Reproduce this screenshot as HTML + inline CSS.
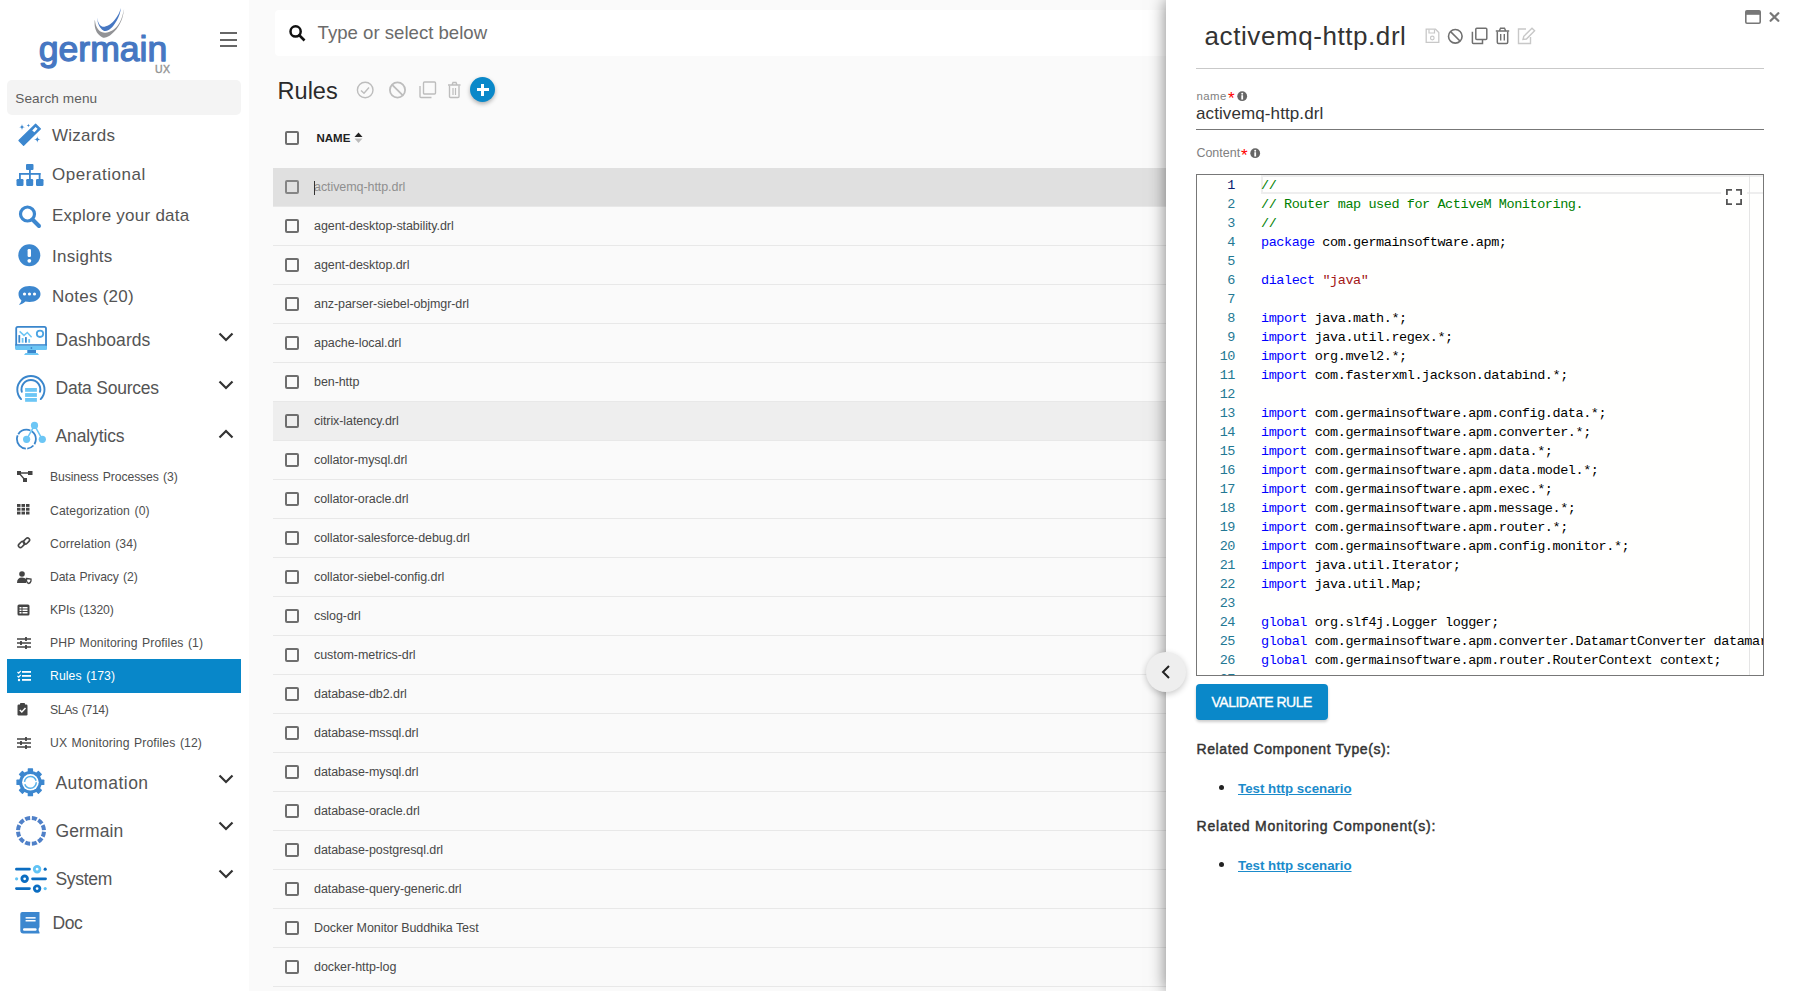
<!DOCTYPE html>
<html><head><meta charset="utf-8"><title>Rules</title>
<style>
html,body{margin:0;padding:0;}
body{width:1794px;height:991px;overflow:hidden;position:relative;background:#fafafa;font-family:"Liberation Sans", sans-serif;}
.t{position:absolute;white-space:nowrap;}
.m{font-family:"Liberation Mono", monospace;}
svg{overflow:visible;}
</style></head><body>
<div style="position:absolute;left:0px;top:0px;width:249px;height:991px;background:#fff;"></div>
<svg style="position:absolute;left:85px;top:0px;" width="50" height="45" viewBox="0 0 50 45"><path d="M9.76 19.98 C9.54 20.13 9.50 24.98 9.99 27.25 C10.48 29.52 11.35 31.86 12.72 33.61 C14.08 35.35 16.35 37.24 18.17 37.69 C19.98 38.15 21.80 37.31 23.61 36.33 C25.43 35.35 27.40 33.53 29.06 31.79 C30.73 30.05 32.24 28.16 33.61 25.89 C34.97 23.61 36.33 20.89 37.24 18.17 C38.15 15.44 39.21 9.39 39.06 9.54 C38.90 9.69 37.39 16.42 36.33 19.07 C35.27 21.72 34.21 23.54 32.70 25.43 C31.18 27.32 29.29 29.22 27.25 30.43 C25.20 31.64 22.48 32.55 20.44 32.70 C18.39 32.85 16.50 32.39 14.99 31.34 C13.47 30.28 12.22 28.23 11.35 26.34 C10.48 24.45 9.99 19.83 9.76 19.98Z" fill="#929396"/><path d="M12.26 17.71 C12.22 17.86 12.49 21.12 12.94 22.71 C13.40 24.30 13.96 25.89 14.99 27.25 C16.01 28.61 17.64 30.43 19.07 30.88 C20.51 31.34 22.10 30.81 23.61 29.97 C25.13 29.14 26.79 27.48 28.16 25.89 C29.52 24.30 30.73 22.33 31.79 20.44 C32.85 18.54 33.83 16.58 34.51 14.53 C35.20 12.49 36.03 8.25 35.88 8.17 C35.73 8.10 34.59 12.19 33.61 14.08 C32.62 15.97 31.34 17.86 29.97 19.53 C28.61 21.19 27.17 22.86 25.43 24.07 C23.69 25.28 21.19 26.57 19.53 26.79 C17.86 27.02 16.50 26.26 15.44 25.43 C14.38 24.60 13.70 23.09 13.17 21.80 C12.64 20.51 12.30 17.56 12.26 17.71Z" fill="#4677c2"/></svg>
<svg style="position:absolute;left:36px;top:30px" width="136" height="42"><text x="2.8" y="30.9" textLength="128.5" lengthAdjust="spacingAndGlyphs" font-family="Liberation Sans" font-size="35" fill="#4677c2" stroke="#4677c2" stroke-width="1.25" stroke-linejoin="round">germain</text></svg>
<div class="t" style="left:155px;top:63.81px;font-size:10.5px;line-height:10.5px;color:#939393;font-weight:normal;letter-spacing:0.3px;-webkit-text-stroke:0.4px #939393;">UX</div>
<div style="position:absolute;left:220px;top:32px;width:17px;height:2.4px;background:#666;"></div>
<div style="position:absolute;left:220px;top:38.6px;width:17px;height:2.4px;background:#666;"></div>
<div style="position:absolute;left:220px;top:45px;width:17px;height:2.4px;background:#666;"></div>
<div style="position:absolute;left:7px;top:80px;width:234px;height:35px;background:#f4f4f4;border-radius:5px;"></div>
<div class="t" style="left:15.3px;top:91.82px;font-size:13.6px;line-height:13.6px;color:#5e5e5e;font-weight:normal;letter-spacing:0.1px;">Search menu</div>
<div class="t" style="left:52px;top:127.00px;font-size:17px;line-height:17px;color:#545454;font-weight:normal;letter-spacing:0.25px;">Wizards</div>
<div class="t" style="left:52px;top:166.00px;font-size:17px;line-height:17px;color:#545454;font-weight:normal;letter-spacing:0.55px;">Operational</div>
<div class="t" style="left:52px;top:207.00px;font-size:17px;line-height:17px;color:#545454;font-weight:normal;letter-spacing:0.25px;">Explore your data</div>
<div class="t" style="left:52px;top:248.00px;font-size:17px;line-height:17px;color:#545454;font-weight:normal;letter-spacing:0.25px;">Insights</div>
<div class="t" style="left:52px;top:288.00px;font-size:17px;line-height:17px;color:#545454;font-weight:normal;letter-spacing:0.25px;">Notes (20)</div>
<svg style="position:absolute;left:14px;top:120px;" width="34" height="30" viewBox="0 0 34 30"><g fill="#3c87cf"><polygon points="5,20.5 21.6,4.2 26.4,8.9 9.6,25.3" stroke="#3c87cf" stroke-width="1.3" stroke-linejoin="round"/><polygon points="18.2,10.5 21.5,7 23.6,8.8 20.4,12.3" fill="#fff"/><path d="M8 3.6999999999999997 Q8 7.1 11.4 7.1 Q8 7.1 8 10.5 Q8 7.1 4.6 7.1 Q8 7.1 8 3.6999999999999997Z"/><path d="M14.4 3.8 Q14.4 5.5 16.1 5.5 Q14.4 5.5 14.4 7.2 Q14.4 5.5 12.700000000000001 5.5 Q14.4 5.5 14.4 3.8Z"/><path d="M23.3 15.999999999999998 Q23.3 19.4 26.7 19.4 Q23.3 19.4 23.3 22.799999999999997 Q23.3 19.4 19.900000000000002 19.4 Q23.3 19.4 23.3 15.999999999999998Z"/></g></svg>
<svg style="position:absolute;left:16px;top:164px;" width="28" height="22" viewBox="0 0 28 22"><g fill="#3c87cf"><rect x="10" y="0" width="7.5" height="6" rx="1"/><rect x="0.5" y="15" width="7" height="7" rx="1.2"/><rect x="10.2" y="15" width="7" height="7" rx="1.2"/><rect x="20" y="15" width="7.5" height="7" rx="1.2"/><rect x="13" y="5" width="1.8" height="10"/><rect x="3" y="9" width="21.5" height="1.8"/><rect x="3" y="9" width="1.8" height="6"/><rect x="22.7" y="9" width="1.8" height="6"/></g></svg>
<svg style="position:absolute;left:18px;top:205px;" width="24" height="22" viewBox="0 0 24 22"><g fill="none" stroke="#3c87cf"><circle cx="9.5" cy="9" r="7" stroke-width="3.2"/><path d="M14.5 14.5 L21 21" stroke-width="4" stroke-linecap="round"/></g></svg>
<svg style="position:absolute;left:18px;top:244px;" width="23" height="23" viewBox="0 0 23 23"><circle cx="11.3" cy="11.3" r="11" fill="#3c87cf"/><rect x="9.6" y="5" width="3.4" height="8" rx="1.2" fill="#fff"/><circle cx="11.3" cy="16.8" r="1.9" fill="#fff"/></svg>
<svg style="position:absolute;left:18px;top:285px;" width="23" height="21" viewBox="0 0 23 21"><path d="M11.5 1 C17.8 1 22.5 4.5 22.5 9 C22.5 13.5 17.8 17 11.5 17 C10 17 8.7 16.8 7.4 16.5 C5.5 18.3 3 19.5 0.8 19.8 C2.2 18.5 3.2 16.9 3.4 15.2 C1.4 13.7 0.5 11.5 0.5 9 C0.5 4.5 5.2 1 11.5 1Z" fill="#3c87cf"/><circle cx="6.5" cy="9" r="1.6" fill="#fff"/><circle cx="11.5" cy="9" r="1.6" fill="#fff"/><circle cx="16.5" cy="9" r="1.6" fill="#fff"/></svg>
<div class="t" style="left:55.5px;top:332.01px;font-size:17.5px;line-height:17.5px;color:#545454;font-weight:normal;letter-spacing:0.05px;">Dashboards</div>
<svg style="position:absolute;left:218px;top:332px;" width="16" height="10" viewBox="0 0 16 10"><path d="M1.5 1.5 L8 8 L14.5 1.5" fill="none" stroke="#333" stroke-width="2.2"/></svg>
<div class="t" style="left:55.5px;top:380.01px;font-size:17.5px;line-height:17.5px;color:#545454;font-weight:normal;letter-spacing:-0.22px;">Data Sources</div>
<svg style="position:absolute;left:218px;top:380px;" width="16" height="10" viewBox="0 0 16 10"><path d="M1.5 1.5 L8 8 L14.5 1.5" fill="none" stroke="#333" stroke-width="2.2"/></svg>
<div class="t" style="left:55.5px;top:428.01px;font-size:17.5px;line-height:17.5px;color:#545454;font-weight:normal;letter-spacing:-0.12px;">Analytics</div>
<svg style="position:absolute;left:218px;top:428.5px;" width="16" height="10" viewBox="0 0 16 10"><path d="M1.5 8.5 L8 2 L14.5 8.5" fill="none" stroke="#333" stroke-width="2.2"/></svg>
<div class="t" style="left:55.5px;top:775.01px;font-size:17.5px;line-height:17.5px;color:#545454;font-weight:normal;letter-spacing:0.45px;">Automation</div>
<svg style="position:absolute;left:218px;top:774px;" width="16" height="10" viewBox="0 0 16 10"><path d="M1.5 1.5 L8 8 L14.5 1.5" fill="none" stroke="#333" stroke-width="2.2"/></svg>
<div class="t" style="left:55.5px;top:823.00px;font-size:17.5px;line-height:17.5px;color:#545454;font-weight:normal;letter-spacing:0.1px;">Germain</div>
<svg style="position:absolute;left:218px;top:821px;" width="16" height="10" viewBox="0 0 16 10"><path d="M1.5 1.5 L8 8 L14.5 1.5" fill="none" stroke="#333" stroke-width="2.2"/></svg>
<div class="t" style="left:55.5px;top:871.01px;font-size:17.5px;line-height:17.5px;color:#545454;font-weight:normal;letter-spacing:-0.3px;">System</div>
<svg style="position:absolute;left:218px;top:869px;" width="16" height="10" viewBox="0 0 16 10"><path d="M1.5 1.5 L8 8 L14.5 1.5" fill="none" stroke="#333" stroke-width="2.2"/></svg>
<svg style="position:absolute;left:12px;top:322px;" width="38" height="36" viewBox="0 0 38 36"><rect x="4.2" y="4.9" width="29.8" height="22.2" rx="1.6" fill="none" stroke="#3a86cc" stroke-width="1.8"/><rect x="3.3" y="23.2" width="31.6" height="4.8" rx="1" fill="#6cc6f5"/><rect x="3.3" y="22.2" width="31.6" height="1.4" fill="#3a86cc"/><circle cx="19.4" cy="26" r="0.9" fill="#3a86cc"/><rect x="15.3" y="28" width="8.7" height="3" fill="#3a86cc"/><path d="M13.5 30.9 H25.5 L27 32.9 H12Z" fill="#6cc6f5"/><g><rect x="6.4" y="13.1" width="1.8" height="7.6" fill="#3a86cc"/><rect x="9.7" y="16" width="1.8" height="4.7" fill="#6cc6f5"/><rect x="13" y="15.1" width="1.8" height="5.6" fill="#3a86cc"/><rect x="16.3" y="17.1" width="1.8" height="3.6" fill="#6cc6f5"/></g><path d="M7.6 9.4 L12 13.4 L15.3 10.5 L19.6 15.3" fill="none" stroke="#6cc6f5" stroke-width="1.5"/><circle cx="28" cy="11.8" r="3.2" fill="none" stroke="#4ba3e3" stroke-width="1.8"/></svg>
<svg style="position:absolute;left:12px;top:370px;" width="38" height="36" viewBox="0 0 38 36"><path d="M9.1 29.1 A13.6 13.6 0 1 1 28.7 29.1" fill="none" stroke="#3a86cc" stroke-width="1.9" stroke-linecap="round"/><path d="M9.8 21.8 A9.4 9.4 0 1 1 28 21.8" fill="none" stroke="#3a86cc" stroke-width="1.9" stroke-linecap="round"/><g fill="#6cc6f5"><rect x="13.1" y="18" width="11.8" height="3.8"/><rect x="13.1" y="23.1" width="11.8" height="3.8"/><rect x="13.1" y="28" width="11.8" height="3.8"/></g></svg>
<svg style="position:absolute;left:12px;top:418px;" width="38" height="34" viewBox="0 0 38 34"><circle cx="14.4" cy="21.1" r="9.5" fill="none" stroke="#3a86cc" stroke-width="1.8" stroke-dasharray="5.31 1.66 6.96 1.49 18.07 1.33 13.76 1.66 9.45 0"/><path d="M14.6 21.3 L22.5 7.4 L30.3 21.3" fill="none" stroke="#6cc6f5" stroke-width="1.5"/><circle cx="22.5" cy="7.4" r="3.6" fill="#6cc6f5"/><circle cx="14.6" cy="21.3" r="3.6" fill="#6cc6f5"/><circle cx="30.3" cy="21.3" r="3.6" fill="#6cc6f5"/></svg>
<svg style="position:absolute;left:12px;top:762px;" width="38" height="38" viewBox="0 0 38 38"><g transform="translate(18.4,20.3)"><rect x="-2.7" y="-14" width="5.4" height="6" rx="0.6" fill="#3c87cf" transform="rotate(0)"/><rect x="-2.7" y="-14" width="5.4" height="6" rx="0.6" fill="#3c87cf" transform="rotate(45)"/><rect x="-2.7" y="-14" width="5.4" height="6" rx="0.6" fill="#3c87cf" transform="rotate(90)"/><rect x="-2.7" y="-14" width="5.4" height="6" rx="0.6" fill="#3c87cf" transform="rotate(135)"/><rect x="-2.7" y="-14" width="5.4" height="6" rx="0.6" fill="#3c87cf" transform="rotate(180)"/><rect x="-2.7" y="-14" width="5.4" height="6" rx="0.6" fill="#3c87cf" transform="rotate(225)"/><rect x="-2.7" y="-14" width="5.4" height="6" rx="0.6" fill="#3c87cf" transform="rotate(270)"/><rect x="-2.7" y="-14" width="5.4" height="6" rx="0.6" fill="#3c87cf" transform="rotate(315)"/><circle r="11.3" fill="#3c87cf"/><circle r="8.3" fill="#fff"/><circle r="5.9" fill="none" stroke="#56b0ea" stroke-width="1.5" stroke-dasharray="16 2.5"/></g></svg>
<svg style="position:absolute;left:12px;top:811px;" width="38" height="38" viewBox="0 0 38 38"><path d="M31.97 20.75 A13 13 0 0 1 30.66 25.65 M29.81 27.12 A13 13 0 0 1 26.22 30.71 M24.75 31.56 A13 13 0 0 1 19.85 32.87 M18.15 32.87 A13 13 0 0 1 13.25 31.56 M11.78 30.71 A13 13 0 0 1 8.19 27.12 M7.34 25.65 A13 13 0 0 1 6.03 20.75 M6.03 19.05 A13 13 0 0 1 7.34 14.15 M8.19 12.68 A13 13 0 0 1 11.78 9.09 M13.25 8.24 A13 13 0 0 1 18.15 6.93 M19.85 6.93 A13 13 0 0 1 24.75 8.24 M26.22 9.09 A13 13 0 0 1 29.81 12.68 M30.66 14.15 A13 13 0 0 1 31.97 19.05" fill="none" stroke="#4f80c8" stroke-width="4"/></svg>
<svg style="position:absolute;left:12px;top:860px;" width="38" height="38" viewBox="0 0 38 38"><g stroke-linecap="round" fill="none"><path d="M4.4 9.2 H17.5 M20.5 18.8 H33.6 M4.4 28.6 H17.5" stroke="#0b6dc1" stroke-width="2.7"/><circle cx="25.1" cy="9.2" r="2.8" stroke="#62c4f5" stroke-width="2.8"/><circle cx="12.65" cy="18.8" r="2.8" stroke="#0b6dc1" stroke-width="2.8"/><circle cx="25.1" cy="28.6" r="2.8" stroke="#0b6dc1" stroke-width="2.8"/></g><circle cx="33.2" cy="9.2" r="1.6" fill="#0b6dc1"/><circle cx="4.6" cy="18.8" r="1.6" fill="#62c4f5"/><circle cx="33.2" cy="28.6" r="1.6" fill="#62c4f5"/></svg>
<div class="t" style="left:52.4px;top:915.01px;font-size:17.5px;line-height:17.5px;color:#545454;font-weight:normal;letter-spacing:-0.4px;">Doc</div>
<svg style="position:absolute;left:14px;top:906px;" width="32" height="32" viewBox="0 0 32 32"><path d="M8.3 6 H25.5 V21.2 Q24.6 22 24.6 23.6 Q24.6 25.2 25.5 26 V27.6 H9.3 Q6.3 27.6 6.3 24.6 V8 Q6.3 6 8.3 6Z" fill="#3c87cf"/><rect x="11.6" y="11.1" width="10" height="1.5" fill="#fff"/><rect x="11.6" y="14" width="10" height="1.5" fill="#fff"/><rect x="9" y="22.3" width="13.6" height="2.5" rx="1.2" fill="#fff"/></svg>
<div style="position:absolute;left:7px;top:659px;width:234px;height:34px;background:#0887c9;"></div>
<div class="t" style="left:50px;top:471.31px;font-size:12.2px;line-height:12.2px;color:#4e4e4e;font-weight:normal;letter-spacing:-0.11px;word-spacing:1px;">Business Processes (3)</div>
<div class="t" style="left:50px;top:505.20px;font-size:12.2px;line-height:12.2px;color:#4e4e4e;font-weight:normal;letter-spacing:0.1px;word-spacing:1px;">Categorization (0)</div>
<div class="t" style="left:50px;top:538.41px;font-size:12.2px;line-height:12.2px;color:#4e4e4e;font-weight:normal;letter-spacing:0.1px;word-spacing:1px;">Correlation (34)</div>
<div class="t" style="left:50px;top:571.00px;font-size:12.2px;line-height:12.2px;color:#4e4e4e;font-weight:normal;letter-spacing:-0.11px;word-spacing:1px;">Data Privacy (2)</div>
<div class="t" style="left:50px;top:604.31px;font-size:12.2px;line-height:12.2px;color:#4e4e4e;font-weight:normal;letter-spacing:-0.16px;word-spacing:1px;">KPIs (1320)</div>
<div class="t" style="left:50px;top:637.00px;font-size:12.2px;line-height:12.2px;color:#4e4e4e;font-weight:normal;letter-spacing:0.1px;word-spacing:1px;">PHP Monitoring Profiles (1)</div>
<div class="t" style="left:50px;top:670.20px;font-size:12.2px;line-height:12.2px;color:#fff;font-weight:normal;letter-spacing:0.1px;word-spacing:1px;">Rules (173)</div>
<div class="t" style="left:50px;top:703.50px;font-size:12.2px;line-height:12.2px;color:#4e4e4e;font-weight:normal;letter-spacing:-0.35px;word-spacing:1px;">SLAs (714)</div>
<div class="t" style="left:50px;top:737.20px;font-size:12.2px;line-height:12.2px;color:#4e4e4e;font-weight:normal;letter-spacing:0.1px;word-spacing:1px;">UX Monitoring Profiles (12)</div>
<svg style="position:absolute;left:17px;top:470px;" width="16" height="14" viewBox="0 0 16 14"><g fill="#444"><rect x="0" y="1" width="4" height="4"/><rect x="11" y="1" width="4.5" height="4"/><rect x="6" y="8" width="4" height="4"/><path d="M2 3 H13 M2 3 L8 10" stroke="#444" stroke-width="1.3"/></g></svg>
<svg style="position:absolute;left:17px;top:504px;" width="14" height="11" viewBox="0 0 14 11"><g fill="#444"><rect x="0.0" y="0.0" width="3.5" height="2.9"/><rect x="4.5" y="0.0" width="3.5" height="2.9"/><rect x="9.0" y="0.0" width="3.5" height="2.9"/><rect x="0.0" y="3.8" width="3.5" height="2.9"/><rect x="4.5" y="3.8" width="3.5" height="2.9"/><rect x="9.0" y="3.8" width="3.5" height="2.9"/><rect x="0.0" y="7.6" width="3.5" height="2.9"/><rect x="4.5" y="7.6" width="3.5" height="2.9"/><rect x="9.0" y="7.6" width="3.5" height="2.9"/></g></svg>
<svg style="position:absolute;left:17px;top:537px;" width="14" height="13" viewBox="0 0 14 13"><g fill="none" stroke="#444" stroke-width="1.6"><rect x="1" y="5.5" width="7" height="4" rx="2" transform="rotate(-45 4.5 7.5)"/><rect x="6" y="2" width="7" height="4" rx="2" transform="rotate(-45 9.5 4)"/></g></svg>
<svg style="position:absolute;left:17px;top:571px;" width="15" height="12" viewBox="0 0 15 12"><g fill="#444"><circle cx="5" cy="3" r="2.8"/><path d="M0 12 Q0 6.5 5 6.5 Q8 6.5 9 8 V12Z"/></g><path d="M9.5 7.5 L14 8 V10 Q13.5 12 11.7 12.5 Q10 12 9.5 10Z" fill="none" stroke="#444" stroke-width="1.3"/></svg>
<svg style="position:absolute;left:17px;top:604px;" width="13" height="12" viewBox="0 0 13 12"><rect x="0.5" y="0.5" width="12" height="11" rx="1.5" fill="#444"/><g fill="#fff"><rect x="2.5" y="3" width="2" height="1.5"/><rect x="5.5" y="3" width="5" height="1.5"/><rect x="2.5" y="5.5" width="2" height="1.5"/><rect x="5.5" y="5.5" width="5" height="1.5"/><rect x="2.5" y="8" width="2" height="1.5"/><rect x="5.5" y="8" width="5" height="1.5"/></g></svg>
<svg style="position:absolute;left:17px;top:637px;" width="14" height="12" viewBox="0 0 14 12"><g stroke="#444" stroke-width="1.5"><path d="M0 2 H14 M0 6 H14 M0 10 H14"/><path d="M9 0 V4 M4 4 V8 M9 8 V12" stroke-width="1.8"/></g></svg>
<svg style="position:absolute;left:17px;top:737px;" width="14" height="12" viewBox="0 0 14 12"><g stroke="#444" stroke-width="1.5"><path d="M0 2 H14 M0 6 H14 M0 10 H14"/><path d="M9 0 V4 M4 4 V8 M9 8 V12" stroke-width="1.8"/></g></svg>
<svg style="position:absolute;left:17px;top:670px;" width="14" height="12" viewBox="0 0 14 12"><g fill="#fff"><path d="M0.5 2 L1.7 3.2 L3.8 0.8" stroke="#fff" stroke-width="1.2" fill="none"/><rect x="5" y="1" width="9" height="1.8"/><path d="M0.5 6 L1.7 7.2 L3.8 4.8" stroke="#fff" stroke-width="1.2" fill="none"/><rect x="5" y="5" width="9" height="1.8"/><circle cx="2" cy="10" r="1.2"/><rect x="5" y="9" width="9" height="1.8"/></g></svg>
<svg style="position:absolute;left:17px;top:703px;" width="11" height="13" viewBox="0 0 11 13"><rect x="0.5" y="1.5" width="10" height="11" rx="1.2" fill="#444"/><rect x="3" y="0" width="5" height="3" rx="0.8" fill="#444"/><path d="M2.8 7 L4.8 9 L8.5 5" stroke="#fff" stroke-width="1.5" fill="none"/></svg>
<div style="position:absolute;left:275px;top:10px;width:1510px;height:45.5px;background:#fff;border-radius:4px;"></div>
<svg style="position:absolute;left:289px;top:25px;" width="17" height="17" viewBox="0 0 17 17"><circle cx="6.6" cy="6.4" r="5.1" fill="none" stroke="#111" stroke-width="2.5"/><path d="M10.3 10.2 L14.6 14.6" stroke="#111" stroke-width="2.6" stroke-linecap="square"/></svg>
<div class="t" style="left:317.6px;top:23.82px;font-size:18.6px;line-height:18.6px;color:#6b6b6b;font-weight:normal;">Type or select below</div>
<div class="t" style="left:277.6px;top:79.81px;font-size:23.5px;line-height:23.5px;color:#2a2a2a;font-weight:normal;">Rules</div>
<svg style="position:absolute;left:356px;top:81px;" width="19" height="19" viewBox="0 0 19 19"><circle cx="9.2" cy="9" r="7.8" fill="none" stroke="#bdbdbd" stroke-width="1.4"/><path d="M5 9.5 L8 12.3 L13 6.5" fill="none" stroke="#bdbdbd" stroke-width="1.4"/></svg>
<svg style="position:absolute;left:388px;top:81px;" width="19" height="19" viewBox="0 0 19 19"><circle cx="9.5" cy="9" r="7.6" fill="none" stroke="#bdbdbd" stroke-width="1.8"/><path d="M4.2 3.8 L14.6 14.2" stroke="#bdbdbd" stroke-width="1.8"/></svg>
<svg style="position:absolute;left:419px;top:81px;" width="18" height="18" viewBox="0 0 18 18"><rect x="4.5" y="1" width="12" height="12" rx="1" fill="none" stroke="#bdbdbd" stroke-width="1.4"/><path d="M1 5 V15.5 Q1 16.5 2 16.5 H12.5" fill="none" stroke="#bdbdbd" stroke-width="1.4"/></svg>
<svg style="position:absolute;left:447px;top:81px;" width="15" height="18" viewBox="0 0 15 18"><path d="M1 4 H13.5 M5 4 L6 1.5 H9 L10 4" fill="none" stroke="#bdbdbd" stroke-width="1.4"/><path d="M2.5 4.5 V15.5 Q2.5 16.5 3.5 16.5 H11 Q12 16.5 12 15.5 V4.5" fill="none" stroke="#bdbdbd" stroke-width="1.4"/><path d="M6 7 V14 M8.5 7 V14" stroke="#bdbdbd" stroke-width="1.2"/></svg>
<div style="position:absolute;left:470px;top:77px;width:25px;height:25px;background:#0a88c9;border-radius:50%;box-shadow:0 2px 4px rgba(0,0,0,0.3);"></div>
<div style="position:absolute;left:476.5px;top:88px;width:12px;height:3px;background:#fff;"></div>
<div style="position:absolute;left:481px;top:83.5px;width:3px;height:12px;background:#fff;"></div>
<div style="position:absolute;left:284.7px;top:130.6px;width:10.7px;height:10.7px;border:2px solid #6e6e6e;border-radius:2px;"></div>
<div class="t" style="left:316.5px;top:133.00px;font-size:11.5px;line-height:11.5px;color:#222;font-weight:bold;">NAME</div>
<svg style="position:absolute;left:354px;top:132px;" width="9" height="12" viewBox="0 0 9 12"><path d="M0.5 5 L4.5 0.5 L8.5 5Z" fill="#222"/><path d="M0.5 6.5 L4.5 11 L8.5 6.5Z" fill="#bbb"/></svg>
<div style="position:absolute;left:273px;top:168px;width:1000px;height:38px;background:#e0e0e0;"></div>
<div style="position:absolute;left:273px;top:206px;width:1000px;height:1px;background:#e8e8e8;"></div>
<div style="position:absolute;left:284.7px;top:179.6px;width:10.7px;height:10.7px;border:2px solid #858585;border-radius:2px;"></div>
<div class="t" style="left:314px;top:181.01px;font-size:12.5px;line-height:12.5px;color:#8f8f8f;font-weight:normal;letter-spacing:-0.07px;">activemq-http.drl</div>
<div style="position:absolute;left:273px;top:245px;width:1000px;height:1px;background:#e8e8e8;"></div>
<div style="position:absolute;left:284.7px;top:218.6px;width:10.7px;height:10.7px;border:2px solid #6e6e6e;border-radius:2px;"></div>
<div class="t" style="left:314px;top:220.01px;font-size:12.5px;line-height:12.5px;color:#484848;font-weight:normal;letter-spacing:-0.07px;">agent-desktop-stability.drl</div>
<div style="position:absolute;left:273px;top:284px;width:1000px;height:1px;background:#e8e8e8;"></div>
<div style="position:absolute;left:284.7px;top:257.6px;width:10.7px;height:10.7px;border:2px solid #6e6e6e;border-radius:2px;"></div>
<div class="t" style="left:314px;top:259.01px;font-size:12.5px;line-height:12.5px;color:#484848;font-weight:normal;letter-spacing:-0.07px;">agent-desktop.drl</div>
<div style="position:absolute;left:273px;top:323px;width:1000px;height:1px;background:#e8e8e8;"></div>
<div style="position:absolute;left:284.7px;top:296.6px;width:10.7px;height:10.7px;border:2px solid #6e6e6e;border-radius:2px;"></div>
<div class="t" style="left:314px;top:298.01px;font-size:12.5px;line-height:12.5px;color:#484848;font-weight:normal;letter-spacing:-0.07px;">anz-parser-siebel-objmgr-drl</div>
<div style="position:absolute;left:273px;top:362px;width:1000px;height:1px;background:#e8e8e8;"></div>
<div style="position:absolute;left:284.7px;top:335.6px;width:10.7px;height:10.7px;border:2px solid #6e6e6e;border-radius:2px;"></div>
<div class="t" style="left:314px;top:337.01px;font-size:12.5px;line-height:12.5px;color:#484848;font-weight:normal;letter-spacing:-0.07px;">apache-local.drl</div>
<div style="position:absolute;left:273px;top:401px;width:1000px;height:1px;background:#e8e8e8;"></div>
<div style="position:absolute;left:284.7px;top:374.6px;width:10.7px;height:10.7px;border:2px solid #6e6e6e;border-radius:2px;"></div>
<div class="t" style="left:314px;top:376.01px;font-size:12.5px;line-height:12.5px;color:#484848;font-weight:normal;letter-spacing:-0.07px;">ben-http</div>
<div style="position:absolute;left:273px;top:402px;width:1000px;height:38px;background:#eeeeee;"></div>
<div style="position:absolute;left:273px;top:440px;width:1000px;height:1px;background:#e8e8e8;"></div>
<div style="position:absolute;left:284.7px;top:413.6px;width:10.7px;height:10.7px;border:2px solid #6e6e6e;border-radius:2px;"></div>
<div class="t" style="left:314px;top:415.01px;font-size:12.5px;line-height:12.5px;color:#484848;font-weight:normal;letter-spacing:-0.07px;">citrix-latency.drl</div>
<div style="position:absolute;left:273px;top:479px;width:1000px;height:1px;background:#e8e8e8;"></div>
<div style="position:absolute;left:284.7px;top:452.6px;width:10.7px;height:10.7px;border:2px solid #6e6e6e;border-radius:2px;"></div>
<div class="t" style="left:314px;top:454.01px;font-size:12.5px;line-height:12.5px;color:#484848;font-weight:normal;letter-spacing:-0.07px;">collator-mysql.drl</div>
<div style="position:absolute;left:273px;top:518px;width:1000px;height:1px;background:#e8e8e8;"></div>
<div style="position:absolute;left:284.7px;top:491.6px;width:10.7px;height:10.7px;border:2px solid #6e6e6e;border-radius:2px;"></div>
<div class="t" style="left:314px;top:493.01px;font-size:12.5px;line-height:12.5px;color:#484848;font-weight:normal;letter-spacing:-0.07px;">collator-oracle.drl</div>
<div style="position:absolute;left:273px;top:557px;width:1000px;height:1px;background:#e8e8e8;"></div>
<div style="position:absolute;left:284.7px;top:530.6px;width:10.7px;height:10.7px;border:2px solid #6e6e6e;border-radius:2px;"></div>
<div class="t" style="left:314px;top:532.01px;font-size:12.5px;line-height:12.5px;color:#484848;font-weight:normal;letter-spacing:-0.07px;">collator-salesforce-debug.drl</div>
<div style="position:absolute;left:273px;top:596px;width:1000px;height:1px;background:#e8e8e8;"></div>
<div style="position:absolute;left:284.7px;top:569.6px;width:10.7px;height:10.7px;border:2px solid #6e6e6e;border-radius:2px;"></div>
<div class="t" style="left:314px;top:571.01px;font-size:12.5px;line-height:12.5px;color:#484848;font-weight:normal;letter-spacing:-0.07px;">collator-siebel-config.drl</div>
<div style="position:absolute;left:273px;top:635px;width:1000px;height:1px;background:#e8e8e8;"></div>
<div style="position:absolute;left:284.7px;top:608.6px;width:10.7px;height:10.7px;border:2px solid #6e6e6e;border-radius:2px;"></div>
<div class="t" style="left:314px;top:610.01px;font-size:12.5px;line-height:12.5px;color:#484848;font-weight:normal;letter-spacing:-0.07px;">cslog-drl</div>
<div style="position:absolute;left:273px;top:674px;width:1000px;height:1px;background:#e8e8e8;"></div>
<div style="position:absolute;left:284.7px;top:647.6px;width:10.7px;height:10.7px;border:2px solid #6e6e6e;border-radius:2px;"></div>
<div class="t" style="left:314px;top:649.01px;font-size:12.5px;line-height:12.5px;color:#484848;font-weight:normal;letter-spacing:-0.07px;">custom-metrics-drl</div>
<div style="position:absolute;left:273px;top:713px;width:1000px;height:1px;background:#e8e8e8;"></div>
<div style="position:absolute;left:284.7px;top:686.6px;width:10.7px;height:10.7px;border:2px solid #6e6e6e;border-radius:2px;"></div>
<div class="t" style="left:314px;top:688.01px;font-size:12.5px;line-height:12.5px;color:#484848;font-weight:normal;letter-spacing:-0.07px;">database-db2.drl</div>
<div style="position:absolute;left:273px;top:752px;width:1000px;height:1px;background:#e8e8e8;"></div>
<div style="position:absolute;left:284.7px;top:725.6px;width:10.7px;height:10.7px;border:2px solid #6e6e6e;border-radius:2px;"></div>
<div class="t" style="left:314px;top:727.01px;font-size:12.5px;line-height:12.5px;color:#484848;font-weight:normal;letter-spacing:-0.07px;">database-mssql.drl</div>
<div style="position:absolute;left:273px;top:791px;width:1000px;height:1px;background:#e8e8e8;"></div>
<div style="position:absolute;left:284.7px;top:764.6px;width:10.7px;height:10.7px;border:2px solid #6e6e6e;border-radius:2px;"></div>
<div class="t" style="left:314px;top:766.01px;font-size:12.5px;line-height:12.5px;color:#484848;font-weight:normal;letter-spacing:-0.07px;">database-mysql.drl</div>
<div style="position:absolute;left:273px;top:830px;width:1000px;height:1px;background:#e8e8e8;"></div>
<div style="position:absolute;left:284.7px;top:803.6px;width:10.7px;height:10.7px;border:2px solid #6e6e6e;border-radius:2px;"></div>
<div class="t" style="left:314px;top:805.01px;font-size:12.5px;line-height:12.5px;color:#484848;font-weight:normal;letter-spacing:-0.07px;">database-oracle.drl</div>
<div style="position:absolute;left:273px;top:869px;width:1000px;height:1px;background:#e8e8e8;"></div>
<div style="position:absolute;left:284.7px;top:842.6px;width:10.7px;height:10.7px;border:2px solid #6e6e6e;border-radius:2px;"></div>
<div class="t" style="left:314px;top:844.01px;font-size:12.5px;line-height:12.5px;color:#484848;font-weight:normal;letter-spacing:-0.07px;">database-postgresql.drl</div>
<div style="position:absolute;left:273px;top:908px;width:1000px;height:1px;background:#e8e8e8;"></div>
<div style="position:absolute;left:284.7px;top:881.6px;width:10.7px;height:10.7px;border:2px solid #6e6e6e;border-radius:2px;"></div>
<div class="t" style="left:314px;top:883.01px;font-size:12.5px;line-height:12.5px;color:#484848;font-weight:normal;letter-spacing:-0.07px;">database-query-generic.drl</div>
<div style="position:absolute;left:273px;top:947px;width:1000px;height:1px;background:#e8e8e8;"></div>
<div style="position:absolute;left:284.7px;top:920.6px;width:10.7px;height:10.7px;border:2px solid #6e6e6e;border-radius:2px;"></div>
<div class="t" style="left:314px;top:922.01px;font-size:12.5px;line-height:12.5px;color:#484848;font-weight:normal;letter-spacing:-0.07px;">Docker Monitor Buddhika Test</div>
<div style="position:absolute;left:273px;top:986px;width:1000px;height:1px;background:#e8e8e8;"></div>
<div style="position:absolute;left:284.7px;top:959.6px;width:10.7px;height:10.7px;border:2px solid #6e6e6e;border-radius:2px;"></div>
<div class="t" style="left:314px;top:961.01px;font-size:12.5px;line-height:12.5px;color:#484848;font-weight:normal;letter-spacing:-0.07px;">docker-http-log</div>
<div style="position:absolute;left:314px;top:181px;width:1.3px;height:14px;background:#333;"></div>
<div style="position:absolute;left:1166px;top:0px;width:628px;height:991px;background:#fff;box-shadow:0 0 16px rgba(0,0,0,0.5);"></div>
<div class="t" style="left:1204.6px;top:22.80px;font-size:26px;line-height:26px;color:#333;font-weight:normal;letter-spacing:0.57px;">activemq-http.drl</div>
<svg style="position:absolute;left:1425px;top:28px;" width="15" height="16" viewBox="0 0 15 16"><path d="M1.2 1.2 H10.5 L13.8 4.5 V14.3 H1.2Z" fill="none" stroke="#c8c8c8" stroke-width="1.3"/><path d="M4 1.5 V5 H9.5 V1.5" fill="none" stroke="#c8c8c8" stroke-width="1.2"/><circle cx="7.3" cy="10" r="1.8" fill="none" stroke="#c8c8c8" stroke-width="1.2"/></svg>
<svg style="position:absolute;left:1447px;top:28px;" width="17" height="17" viewBox="0 0 17 17"><circle cx="8.3" cy="8.3" r="6.8" fill="none" stroke="#707070" stroke-width="1.6"/><path d="M3.6 3.6 L13 13" stroke="#707070" stroke-width="1.6"/></svg>
<svg style="position:absolute;left:1471px;top:27px;" width="17" height="18" viewBox="0 0 17 18"><rect x="4.8" y="1.3" width="11" height="11.3" rx="1" fill="none" stroke="#707070" stroke-width="1.5"/><path d="M1.4 4.8 V15.5 Q1.4 16.5 2.4 16.5 H11.5 V13" fill="none" stroke="#707070" stroke-width="1.5"/></svg>
<svg style="position:absolute;left:1495px;top:27px;" width="15" height="18" viewBox="0 0 15 18"><path d="M0.8 4 H14.2 M4.5 3.5 L5.5 1.2 H9.5 L10.5 3.5" fill="none" stroke="#707070" stroke-width="1.4"/><path d="M2.3 4.5 V15.3 Q2.3 16.5 3.5 16.5 H11.5 Q12.7 16.5 12.7 15.3 V4.5" fill="none" stroke="#707070" stroke-width="1.5"/><path d="M5.7 7 V13.5 M9.3 7 V13.5" stroke="#707070" stroke-width="1.4"/></svg>
<svg style="position:absolute;left:1517px;top:27px;" width="19" height="18" viewBox="0 0 19 18"><path d="M9 2 H1.5 V16.5 H13.5 V10" fill="none" stroke="#c8c8c8" stroke-width="1.4"/><path d="M6 12.5 L6.8 9.3 L15 1.2 L17.6 3.8 L9.4 12Z" fill="none" stroke="#c8c8c8" stroke-width="1.4"/></svg>
<svg style="position:absolute;left:1745px;top:10px;" width="16" height="14" viewBox="0 0 16 14"><rect x="0.8" y="0.8" width="14.4" height="12.4" rx="1.2" fill="none" stroke="#777" stroke-width="1.6"/><rect x="0.8" y="0.8" width="14.4" height="4" fill="#777"/></svg>
<svg style="position:absolute;left:1768px;top:11px;" width="13" height="12" viewBox="0 0 13 12"><path d="M2.6 2.3 L10.3 9.8 M10.3 2.3 L2.6 9.8" stroke="#777" stroke-width="2.3" stroke-linecap="round"/></svg>
<div style="position:absolute;left:1196px;top:67.5px;width:568px;height:1.2px;background:#c9c9c9;"></div>
<div class="t" style="left:1196.4px;top:91.01px;font-size:11.4px;line-height:11.4px;color:#808080;font-weight:normal;letter-spacing:0.5px;">name</div>
<div class="t" style="left:1228px;top:90.00px;font-size:17px;line-height:17px;color:#ff0000;font-weight:normal;">*</div>
<svg style="position:absolute;left:1237px;top:91px;" width="11" height="11" viewBox="0 0 11 11"><circle cx="5.2" cy="5.2" r="4.9" fill="#666"/><rect x="4.3" y="4.2" width="1.8" height="4.3" fill="#fff"/><circle cx="5.2" cy="2.7" r="1" fill="#fff"/></svg>
<div class="t" style="left:1196px;top:105.00px;font-size:17px;line-height:17px;color:#333;font-weight:normal;letter-spacing:0.1px;">activemq-http.drl</div>
<div style="position:absolute;left:1196px;top:128.7px;width:568px;height:1.3px;background:#777;"></div>
<div class="t" style="left:1196.4px;top:147.01px;font-size:12.5px;line-height:12.5px;color:#808080;font-weight:normal;">Content</div>
<div class="t" style="left:1241px;top:147.00px;font-size:17px;line-height:17px;color:#ff0000;font-weight:normal;">*</div>
<svg style="position:absolute;left:1250px;top:148px;" width="11" height="11" viewBox="0 0 11 11"><circle cx="5.2" cy="5.2" r="4.9" fill="#666"/><rect x="4.3" y="4.2" width="1.8" height="4.3" fill="#fff"/><circle cx="5.2" cy="2.7" r="1" fill="#fff"/></svg>
<div style="position:absolute;left:1196px;top:174px;width:566px;height:500px;border:1px solid #777;background:#fffffe;overflow:hidden;"></div>
<div style="position:absolute;left:1261px;top:175px;width:500px;height:15px;border:2px solid #eeeeee;border-right:none;"></div>
<div style="position:absolute;left:1749px;top:175px;width:1px;height:500px;background:#e5e5e5;"></div>
<div style="position:absolute;left:1721px;top:185px;width:26px;height:24px;background:#fffffe;"></div>
<svg style="position:absolute;left:1726px;top:189px;" width="16" height="16" viewBox="0 0 16 16"><path d="M0.9 6 V0.9 H6 M10 0.9 H15.1 V6 M15.1 10 V15.1 H10 M6 15.1 H0.9 V10" fill="none" stroke="#555" stroke-width="1.8"/></svg>
<div style="position:absolute;left:1197px;top:175px;width:566px;height:500px;overflow:hidden;">
<div class="t m" style="left:0px;width:38px;text-align:right;top:3.65px;font-size:13.5px;line-height:13.5px;color:#0b216f;letter-spacing:-0.43px">1</div>
<div class="t m" style="left:64px;top:3.65px;font-size:13.5px;line-height:13.5px;letter-spacing:-0.43px;white-space:pre"><span style="color:#008000">//</span></div>
<div class="t m" style="left:0px;width:38px;text-align:right;top:22.65px;font-size:13.5px;line-height:13.5px;color:#237893;letter-spacing:-0.43px">2</div>
<div class="t m" style="left:64px;top:22.65px;font-size:13.5px;line-height:13.5px;letter-spacing:-0.43px;white-space:pre"><span style="color:#008000">//&nbsp;Router&nbsp;map&nbsp;used&nbsp;for&nbsp;ActiveM&nbsp;Monitoring.</span></div>
<div class="t m" style="left:0px;width:38px;text-align:right;top:41.65px;font-size:13.5px;line-height:13.5px;color:#237893;letter-spacing:-0.43px">3</div>
<div class="t m" style="left:64px;top:41.65px;font-size:13.5px;line-height:13.5px;letter-spacing:-0.43px;white-space:pre"><span style="color:#008000">//</span></div>
<div class="t m" style="left:0px;width:38px;text-align:right;top:60.65px;font-size:13.5px;line-height:13.5px;color:#237893;letter-spacing:-0.43px">4</div>
<div class="t m" style="left:64px;top:60.65px;font-size:13.5px;line-height:13.5px;letter-spacing:-0.43px;white-space:pre"><span style="color:#0000ff">package</span><span style="color:#000">&nbsp;com.germainsoftware.apm;</span></div>
<div class="t m" style="left:0px;width:38px;text-align:right;top:79.65px;font-size:13.5px;line-height:13.5px;color:#237893;letter-spacing:-0.43px">5</div>
<div class="t m" style="left:64px;top:79.65px;font-size:13.5px;line-height:13.5px;letter-spacing:-0.43px;white-space:pre"></div>
<div class="t m" style="left:0px;width:38px;text-align:right;top:98.65px;font-size:13.5px;line-height:13.5px;color:#237893;letter-spacing:-0.43px">6</div>
<div class="t m" style="left:64px;top:98.65px;font-size:13.5px;line-height:13.5px;letter-spacing:-0.43px;white-space:pre"><span style="color:#0000ff">dialect</span><span style="color:#000">&nbsp;</span><span style="color:#a31515">"java"</span></div>
<div class="t m" style="left:0px;width:38px;text-align:right;top:117.65px;font-size:13.5px;line-height:13.5px;color:#237893;letter-spacing:-0.43px">7</div>
<div class="t m" style="left:64px;top:117.65px;font-size:13.5px;line-height:13.5px;letter-spacing:-0.43px;white-space:pre"></div>
<div class="t m" style="left:0px;width:38px;text-align:right;top:136.65px;font-size:13.5px;line-height:13.5px;color:#237893;letter-spacing:-0.43px">8</div>
<div class="t m" style="left:64px;top:136.65px;font-size:13.5px;line-height:13.5px;letter-spacing:-0.43px;white-space:pre"><span style="color:#0000ff">import</span><span style="color:#000">&nbsp;java.math.*;</span></div>
<div class="t m" style="left:0px;width:38px;text-align:right;top:155.65px;font-size:13.5px;line-height:13.5px;color:#237893;letter-spacing:-0.43px">9</div>
<div class="t m" style="left:64px;top:155.65px;font-size:13.5px;line-height:13.5px;letter-spacing:-0.43px;white-space:pre"><span style="color:#0000ff">import</span><span style="color:#000">&nbsp;java.util.regex.*;</span></div>
<div class="t m" style="left:0px;width:38px;text-align:right;top:174.65px;font-size:13.5px;line-height:13.5px;color:#237893;letter-spacing:-0.43px">10</div>
<div class="t m" style="left:64px;top:174.65px;font-size:13.5px;line-height:13.5px;letter-spacing:-0.43px;white-space:pre"><span style="color:#0000ff">import</span><span style="color:#000">&nbsp;org.mvel2.*;</span></div>
<div class="t m" style="left:0px;width:38px;text-align:right;top:193.65px;font-size:13.5px;line-height:13.5px;color:#237893;letter-spacing:-0.43px">11</div>
<div class="t m" style="left:64px;top:193.65px;font-size:13.5px;line-height:13.5px;letter-spacing:-0.43px;white-space:pre"><span style="color:#0000ff">import</span><span style="color:#000">&nbsp;com.fasterxml.jackson.databind.*;</span></div>
<div class="t m" style="left:0px;width:38px;text-align:right;top:212.65px;font-size:13.5px;line-height:13.5px;color:#237893;letter-spacing:-0.43px">12</div>
<div class="t m" style="left:64px;top:212.65px;font-size:13.5px;line-height:13.5px;letter-spacing:-0.43px;white-space:pre"></div>
<div class="t m" style="left:0px;width:38px;text-align:right;top:231.65px;font-size:13.5px;line-height:13.5px;color:#237893;letter-spacing:-0.43px">13</div>
<div class="t m" style="left:64px;top:231.65px;font-size:13.5px;line-height:13.5px;letter-spacing:-0.43px;white-space:pre"><span style="color:#0000ff">import</span><span style="color:#000">&nbsp;com.germainsoftware.apm.config.data.*;</span></div>
<div class="t m" style="left:0px;width:38px;text-align:right;top:250.65px;font-size:13.5px;line-height:13.5px;color:#237893;letter-spacing:-0.43px">14</div>
<div class="t m" style="left:64px;top:250.65px;font-size:13.5px;line-height:13.5px;letter-spacing:-0.43px;white-space:pre"><span style="color:#0000ff">import</span><span style="color:#000">&nbsp;com.germainsoftware.apm.converter.*;</span></div>
<div class="t m" style="left:0px;width:38px;text-align:right;top:269.65px;font-size:13.5px;line-height:13.5px;color:#237893;letter-spacing:-0.43px">15</div>
<div class="t m" style="left:64px;top:269.65px;font-size:13.5px;line-height:13.5px;letter-spacing:-0.43px;white-space:pre"><span style="color:#0000ff">import</span><span style="color:#000">&nbsp;com.germainsoftware.apm.data.*;</span></div>
<div class="t m" style="left:0px;width:38px;text-align:right;top:288.65px;font-size:13.5px;line-height:13.5px;color:#237893;letter-spacing:-0.43px">16</div>
<div class="t m" style="left:64px;top:288.65px;font-size:13.5px;line-height:13.5px;letter-spacing:-0.43px;white-space:pre"><span style="color:#0000ff">import</span><span style="color:#000">&nbsp;com.germainsoftware.apm.data.model.*;</span></div>
<div class="t m" style="left:0px;width:38px;text-align:right;top:307.65px;font-size:13.5px;line-height:13.5px;color:#237893;letter-spacing:-0.43px">17</div>
<div class="t m" style="left:64px;top:307.65px;font-size:13.5px;line-height:13.5px;letter-spacing:-0.43px;white-space:pre"><span style="color:#0000ff">import</span><span style="color:#000">&nbsp;com.germainsoftware.apm.exec.*;</span></div>
<div class="t m" style="left:0px;width:38px;text-align:right;top:326.65px;font-size:13.5px;line-height:13.5px;color:#237893;letter-spacing:-0.43px">18</div>
<div class="t m" style="left:64px;top:326.65px;font-size:13.5px;line-height:13.5px;letter-spacing:-0.43px;white-space:pre"><span style="color:#0000ff">import</span><span style="color:#000">&nbsp;com.germainsoftware.apm.message.*;</span></div>
<div class="t m" style="left:0px;width:38px;text-align:right;top:345.65px;font-size:13.5px;line-height:13.5px;color:#237893;letter-spacing:-0.43px">19</div>
<div class="t m" style="left:64px;top:345.65px;font-size:13.5px;line-height:13.5px;letter-spacing:-0.43px;white-space:pre"><span style="color:#0000ff">import</span><span style="color:#000">&nbsp;com.germainsoftware.apm.router.*;</span></div>
<div class="t m" style="left:0px;width:38px;text-align:right;top:364.65px;font-size:13.5px;line-height:13.5px;color:#237893;letter-spacing:-0.43px">20</div>
<div class="t m" style="left:64px;top:364.65px;font-size:13.5px;line-height:13.5px;letter-spacing:-0.43px;white-space:pre"><span style="color:#0000ff">import</span><span style="color:#000">&nbsp;com.germainsoftware.apm.config.monitor.*;</span></div>
<div class="t m" style="left:0px;width:38px;text-align:right;top:383.65px;font-size:13.5px;line-height:13.5px;color:#237893;letter-spacing:-0.43px">21</div>
<div class="t m" style="left:64px;top:383.65px;font-size:13.5px;line-height:13.5px;letter-spacing:-0.43px;white-space:pre"><span style="color:#0000ff">import</span><span style="color:#000">&nbsp;java.util.Iterator;</span></div>
<div class="t m" style="left:0px;width:38px;text-align:right;top:402.65px;font-size:13.5px;line-height:13.5px;color:#237893;letter-spacing:-0.43px">22</div>
<div class="t m" style="left:64px;top:402.65px;font-size:13.5px;line-height:13.5px;letter-spacing:-0.43px;white-space:pre"><span style="color:#0000ff">import</span><span style="color:#000">&nbsp;java.util.Map;</span></div>
<div class="t m" style="left:0px;width:38px;text-align:right;top:421.65px;font-size:13.5px;line-height:13.5px;color:#237893;letter-spacing:-0.43px">23</div>
<div class="t m" style="left:64px;top:421.65px;font-size:13.5px;line-height:13.5px;letter-spacing:-0.43px;white-space:pre"></div>
<div class="t m" style="left:0px;width:38px;text-align:right;top:440.65px;font-size:13.5px;line-height:13.5px;color:#237893;letter-spacing:-0.43px">24</div>
<div class="t m" style="left:64px;top:440.65px;font-size:13.5px;line-height:13.5px;letter-spacing:-0.43px;white-space:pre"><span style="color:#0000ff">global</span><span style="color:#000">&nbsp;org.slf4j.Logger&nbsp;logger;</span></div>
<div class="t m" style="left:0px;width:38px;text-align:right;top:459.65px;font-size:13.5px;line-height:13.5px;color:#237893;letter-spacing:-0.43px">25</div>
<div class="t m" style="left:64px;top:459.65px;font-size:13.5px;line-height:13.5px;letter-spacing:-0.43px;white-space:pre"><span style="color:#0000ff">global</span><span style="color:#000">&nbsp;com.germainsoftware.apm.converter.DatamartConverter&nbsp;datamartConverter;</span></div>
<div class="t m" style="left:0px;width:38px;text-align:right;top:478.65px;font-size:13.5px;line-height:13.5px;color:#237893;letter-spacing:-0.43px">26</div>
<div class="t m" style="left:64px;top:478.65px;font-size:13.5px;line-height:13.5px;letter-spacing:-0.43px;white-space:pre"><span style="color:#0000ff">global</span><span style="color:#000">&nbsp;com.germainsoftware.apm.router.RouterContext&nbsp;context;</span></div>
<div class="t m" style="left:0px;width:38px;text-align:right;top:497.65px;font-size:13.5px;line-height:13.5px;color:#237893;letter-spacing:-0.43px">27</div>
<div class="t m" style="left:64px;top:497.65px;font-size:13.5px;line-height:13.5px;letter-spacing:-0.43px;white-space:pre"><span style="color:#000"></span></div>
</div>
<div style="position:absolute;left:1196px;top:684px;width:132px;height:36px;background:#0a88c9;border-radius:4px;box-shadow:0 2px 3px rgba(0,0,0,0.2);"></div>
<div class="t" style="left:1211.5px;top:695.01px;font-size:14px;line-height:14px;color:#fff;font-weight:normal;letter-spacing:-0.5px;-webkit-text-stroke:0.35px #fff;">VALIDATE RULE</div>
<div class="t" style="left:1196.5px;top:742.01px;font-size:14px;line-height:14px;color:#333;font-weight:normal;letter-spacing:0.6px;-webkit-text-stroke:0.45px #333;">Related Component Type(s):</div>
<div style="position:absolute;left:1218.8px;top:785px;width:5px;height:5px;background:#222;border-radius:50%;"></div>
<div class="t" style="left:1238px;top:781.71px;font-size:13.3px;line-height:13.3px;color:#1b8bcb;font-weight:bold;text-decoration:underline;">Test http scenario</div>
<div class="t" style="left:1196.5px;top:819.01px;font-size:14px;line-height:14px;color:#333;font-weight:normal;letter-spacing:0.8px;-webkit-text-stroke:0.45px #333;">Related Monitoring Component(s):</div>
<div style="position:absolute;left:1218.8px;top:862px;width:5px;height:5px;background:#222;border-radius:50%;"></div>
<div class="t" style="left:1238px;top:858.71px;font-size:13.3px;line-height:13.3px;color:#1b8bcb;font-weight:bold;text-decoration:underline;">Test http scenario</div>
<div style="position:absolute;left:1146px;top:652px;width:40px;height:40px;background:#eeeeee;border-radius:50%;box-shadow:0 2px 6px rgba(0,0,0,0.22);"></div>
<svg style="position:absolute;left:1159px;top:664px;" width="14" height="16" viewBox="0 0 14 16"><path d="M10 2 L4 8 L10 14" fill="none" stroke="#222" stroke-width="2"/></svg>
</body></html>
